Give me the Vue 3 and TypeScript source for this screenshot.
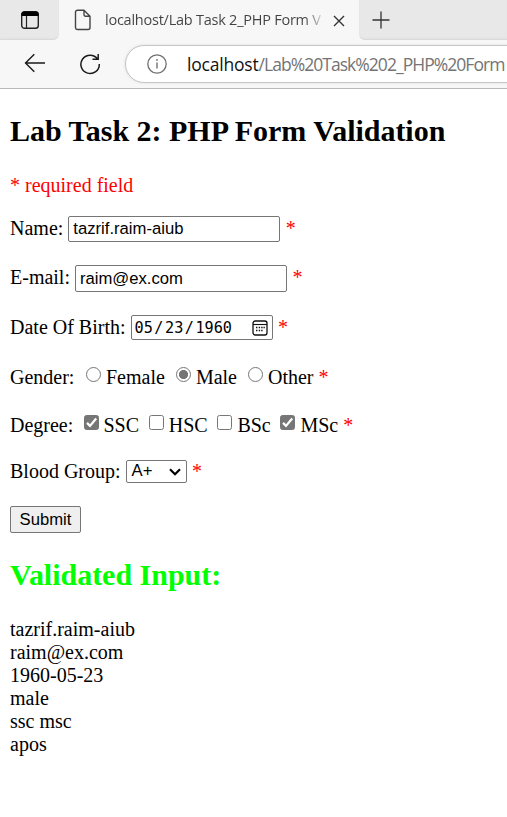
<script setup lang="ts">
import { ref } from 'vue'

interface Choice {
  value: string
  label: string
}

const name = ref('tazrif.raim-aiub')
const email = ref('raim@ex.com')
const dob = ref(['05', '23', '1960'])
const gender = ref('male')
const degrees = ref(['ssc', 'msc'])
const blood = ref('A+')

const genderOptions: Choice[] = [
  { value: 'female', label: 'Female' },
  { value: 'male', label: 'Male' },
  { value: 'other', label: 'Other' },
]
const degreeOptions: Choice[] = [
  { value: 'ssc', label: 'SSC' },
  { value: 'hsc', label: 'HSC' },
  { value: 'bsc', label: 'BSc' },
  { value: 'msc', label: 'MSc' },
]
const results: string[] = ['tazrif.raim-aiub', 'raim@ex.com', '1960-05-23', 'male', 'ssc msc', 'apos']
</script>

<template>
  <div class="window">
    <header class="browser">
      <div class="tabs">
        <div class="strip left">
          <svg class="workspaces" width="20" height="20" viewBox="0 0 20 20">
            <rect x="1.7" y="1.7" width="16.6" height="16.6" rx="2.8" fill="none" stroke="#222" stroke-width="1.4" />
            <path d="M1.5 6V4.2A2.8 2.8 0 0 1 4.3 1.4h11.4a2.8 2.8 0 0 1 2.8 2.8V6z" fill="#000" />
            <path d="M6.5 6v12" stroke="#222" stroke-width="1.2" />
          </svg>
        </div>
        <div class="tab">
          <svg class="page-icon" width="18" height="22" viewBox="0 0 18 22">
            <path d="M3.5 1.2H10l6 6v11.3a2 2 0 0 1-2 2H3.5a2 2 0 0 1-2-2V3.2a2 2 0 0 1 2-2zM10 1.2v4.500a1.5 1.5 0 0 0 1.5 1.5H16" fill="none" stroke="#444" stroke-width="1.4" stroke-linejoin="round" />
          </svg>
          <span class="tab-title">localhost/Lab Task 2_PHP Form V</span>
          <svg class="close" width="12" height="12" viewBox="0 0 12 12">
            <path d="M1 1l10 10M11 1L1 11" stroke="#333" stroke-width="1.4" />
          </svg>
        </div>
        <div class="strip right">
          <svg width="18" height="18" viewBox="0 0 18 18">
            <path d="M9 .5v17M.5 9h17" stroke="#333" stroke-width="1.3" />
          </svg>
        </div>
      </div>
      <div class="toolbar">
        <svg class="back" width="22" height="20" viewBox="0 0 22 20">
          <path d="M21 10H1.5M10.3 1.2L1.5 10l8.8 8.8" fill="none" stroke="#1b1b1b" stroke-width="1.4" />
        </svg>
        <svg class="reload" width="22" height="22" viewBox="0 0 22 22">
          <path d="M18.6 6A9.200 9.200 0 1 0 20.300 11M19.200 1v5.300h-5.700" fill="none" stroke="#1b1b1b" stroke-width="1.5" />
        </svg>
        <div class="address">
          <svg width="20" height="20" viewBox="0 0 20 20">
            <circle cx="10" cy="10" r="9.2" fill="none" stroke="#707070" stroke-width="1.3" />
            <path d="M10 8.500v6" stroke="#707070" stroke-width="1.4" />
            <circle cx="10" cy="5.9" r=".95" fill="#707070" />
          </svg>
          <span class="url"><span class="host">localhost</span><span class="path">/Lab%20Task%202_PHP%20Form</span></span>
        </div>
      </div>
    </header>

    <main>
      <h2>Lab Task 2: PHP Form Validation</h2>
      <p class="required">* required field</p>
      <form @submit.prevent>
        <div class="row name-row">
          <label class="text">Name:</label>
          <input v-model="name" class="box" type="text" />
          <span class="text star">*</span>
        </div>
        <div class="row email-row">
          <label class="text">E-mail:</label>
          <input v-model="email" class="box tall" type="text" />
          <span class="text star">*</span>
        </div>
        <div class="row dob-row">
          <label class="text">Date Of Birth:</label>
          <div class="date">
            <span>{{ dob[0] }}</span><span class="slash">/</span><span>{{ dob[1] }}</span><span class="slash">/</span><span>{{ dob[2] }}</span>
            <svg width="16" height="16" viewBox="0 0 16 16">
              <rect x="1" y="1" width="14" height="14" rx="2.2" fill="none" stroke="#111" stroke-width="1.3" />
              <path d="M1 4.500h14" stroke="#111" stroke-width="1.1" />
              <path d="M6.700 7.500h1.400M9.200 7.500h1.400M11.500 7.500h1.300M4 7.500h1.400M4 10.500h1.400M6.700 10.500h1.400M9.200 10.500h1.400" stroke="#111" stroke-width="1.4" />
            </svg>
          </div>
          <span class="text star">*</span>
        </div>
        <div class="row gender-row">
          <span class="text caption">Gender:</span>
          <label v-for="g in genderOptions" :key="g.value" class="choice" :class="g.value">
            <input v-model="gender" type="radio" name="gender" :value="g.value" />
            <span class="text">{{ g.label }}</span>
          </label>
          <span class="text star">*</span>
        </div>
        <div class="row degree-row">
          <span class="text caption">Degree:</span>
          <label v-for="d in degreeOptions" :key="d.value" class="choice" :class="d.value">
            <input v-model="degrees" type="checkbox" :value="d.value" />
            <span class="check">
              <svg v-if="degrees.includes(d.value)" width="15" height="15" viewBox="0 0 15 15">
                <path d="M3 7.9l3 3L12.2 3.500" fill="none" stroke="#fff" stroke-width="2.2" />
              </svg>
            </span>
            <span class="text">{{ d.label }}</span>
          </label>
          <span class="text star">*</span>
        </div>
        <div class="row blood-row">
          <label class="text">Blood Group:</label>
          <div class="select">
            <span>{{ blood }}</span>
            <svg width="12" height="8" viewBox="0 0 12 8">
              <path d="M1 1.3l5 5 5-5" fill="none" stroke="#000" stroke-width="2.2" />
            </svg>
          </div>
          <span class="text star">*</span>
        </div>
        <button type="submit">Submit</button>
      </form>
      <h2 class="validated">Validated Input:</h2>
      <div class="results">
        <div v-for="r in results" :key="r">{{ r }}</div>
      </div>
    </main>
  </div>
</template>

<style>
body {
  background: #fff;
  overflow: hidden;
}
</style>

<style scoped>
* {
  box-sizing: border-box;
}
svg {
  display: block;
  flex: none;
}
.window {
  width: 507px;
  height: 817px;
  overflow: hidden;
  background: #fff;
  color: #000;
  font: 20px/23px "Liberation Serif", "Times New Roman", serif;
}
.browser {
  height: 89px;
  background: #f7f7f7;
  border-bottom: 1px solid #bababa;
  font-family: "Open Sans", "Noto Sans", sans-serif;
  white-space: nowrap;
}
.tabs {
  display: flex;
  height: 40px;
  background: #f7f7f7;
}
.strip {
  background: #e8e8e8;
  box-shadow: inset 0 -2px 2px -1px #d6d6d6;
}
.left {
  width: 59px;
  padding: 10px 0 0 20px;
  border-bottom-right-radius: 6px;
}
.tab {
  width: 300px;
  display: flex;
  padding-left: 15px;
}
.page-icon {
  margin: 9px 13px 0 0;
}
.tab-title {
  width: 219px;
  overflow: hidden;
  font-size: 14.5px;
  line-height: 39px;
  letter-spacing: -0.24px;
  color: transparent;
  background: linear-gradient(90deg, #424242 200px, #d5d5d5 217px);
  background-clip: text;
}
.close {
  margin: 15px 0 0 9px;
}
.right {
  flex: 1;
  padding: 11px 0 0 13px;
  border-bottom-left-radius: 6px;
}
.toolbar {
  display: flex;
  height: 48px;
}
.back {
  margin: 13px 0 0 24px;
}
.reload {
  margin: 13px 0 0 33px;
}
.address {
  display: flex;
  flex: none;
  width: 420px;
  height: 38px;
  margin: 5px 0 0 24px;
  padding: 8px 0 0 21px;
  border: 1px solid #c6c6c6;
  border-radius: 19px;
  background: #fff;
  box-shadow: 0 0 3px #ddd;
}
.url {
  margin-left: 20px;
  font-size: 17.5px;
  line-height: 20px;
}
.host {
  color: #111;
  letter-spacing: -0.2px;
}
.path {
  color: #747474;
  letter-spacing: -0.96px;
}
main {
  padding-left: 10px;
}
h2 {
  margin: 0;
  padding-top: 25px;
  font-size: 30px;
  line-height: 34px;
  letter-spacing: -0.02px;
}
.required {
  margin: 26px 0 0;
  color: #f00;
}
form {
  padding-top: 19px;
}
.row {
  display: flex;
  align-items: flex-start;
  white-space: nowrap;
}
.text {
  padding-top: 1px;
}
.name-row {
  height: 49px;
}
.email-row {
  height: 50px;
}
.dob-row {
  height: 50px;
}
.gender-row {
  height: 48px;
}
.degree-row {
  height: 46px;
}
.blood-row {
  height: 47px;
}
.star {
  margin-left: 5.5px;
  color: #f00;
}
.box,
.date,
.select,
button {
  border: 1px solid #767676;
  border-radius: 2px;
  background: #fff;
  color: #000;
  font: 16.667px/20px "Liberation Sans", Arial, sans-serif;
}
.box {
  width: 212px;
  height: 26px;
  margin: 0 0 0 5px;
  padding: 0 4px 1px;
  outline: none;
}
.tall {
  height: 27px;
  padding-bottom: 0;
}
.date {
  display: flex;
  width: 142px;
  height: 25px;
  margin-left: 5px;
  padding: 2px 4px 0 3px;
  font: 15.2px/20px "DejaVu Sans Mono", monospace;
}
.slash {
  margin: 0 1.5px;
}
.date svg {
  margin: 2px 0 0 auto;
}
.choice {
  display: flex;
}
.choice input {
  appearance: none;
  flex: none;
  width: 15px;
  height: 15px;
  margin: 2px 5px 0 0;
  border: 1px solid #767676;
  border-radius: 50%;
  background: #fff;
}
.choice input[type="radio"]:checked {
  background: radial-gradient(circle, #767676 4.2px, #fff 5px);
}
.choice input[type="checkbox"] {
  position: absolute;
  opacity: 0;
}
.check {
  width: 15px;
  height: 15px;
  margin: 2px 5px 0 0;
  border: 1px solid #767676;
  border-radius: 2.5px;
}
.check svg {
  margin: -1px;
}
.check:has(svg) {
  background: #767676;
}
.caption {
  width: 76px;
}
.degree-row .caption {
  width: 73.5px;
}
.male {
  margin-left: 11px;
}
.other {
  margin-left: 11px;
}
.hsc,
.bsc,
.msc {
  margin-left: 9.7px;
}
.degree-row .star,
.gender-row .star {
  margin-left: 5px;
}
.select {
  display: flex;
  width: 61px;
  height: 23px;
  margin: 1px 0 0 5px;
  padding-left: 5px;
}
.select svg {
  margin: 7px 5px 0 auto;
}
button {
  display: block;
  width: 71px;
  height: 27px;
  padding: 0;
  background: #efefef;
}
.validated {
  color: #0f0;
}
.results {
  padding-top: 26px;
}
</style>
